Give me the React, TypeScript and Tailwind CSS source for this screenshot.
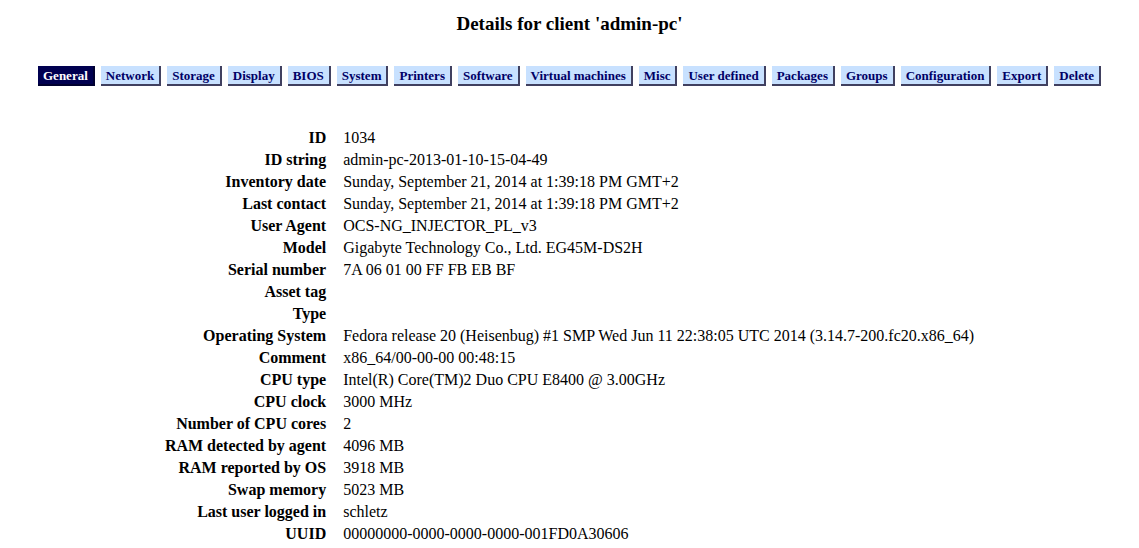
import React from "react";

const tabs = ["General","Network","Storage","Display","BIOS","System","Printers","Software","Virtual machines","Misc","User defined","Packages","Groups","Configuration","Export","Delete"];

const rows: [string, string][] = [
  ["ID", "1034"],
  ["ID string", "admin-pc-2013-01-10-15-04-49"],
  ["Inventory date", "Sunday, September 21, 2014 at 1:39:18 PM GMT+2"],
  ["Last contact", "Sunday, September 21, 2014 at 1:39:18 PM GMT+2"],
  ["User Agent", "OCS-NG_INJECTOR_PL_v3"],
  ["Model", "Gigabyte Technology Co., Ltd. EG45M-DS2H"],
  ["Serial number", "7A 06 01 00 FF FB EB BF"],
  ["Asset tag", ""],
  ["Type", ""],
  ["Operating System", "Fedora release 20 (Heisenbug) #1 SMP Wed Jun 11 22:38:05 UTC 2014 (3.14.7-200.fc20.x86_64)"],
  ["Comment", "x86_64/00-00-00 00:48:15"],
  ["CPU type", "Intel(R) Core(TM)2 Duo CPU E8400 @ 3.00GHz"],
  ["CPU clock", "3000 MHz"],
  ["Number of CPU cores", "2"],
  ["RAM detected by agent", "4096 MB"],
  ["RAM reported by OS", "3918 MB"],
  ["Swap memory", "5023 MB"],
  ["Last user logged in", "schletz"],
  ["UUID", "00000000-0000-0000-0000-001FD0A30606"],
];

export default function App() {
  return (
    <div className="w-[1139px] h-[548px] bg-white overflow-hidden text-black" style={{ fontFamily: '"Liberation Serif", serif' }}>
      <h1 className="text-center font-bold text-[19px] leading-[24px] pt-[12px]">Details for client 'admin-pc'</h1>
      <div className="flex justify-center gap-[6px] mt-[30px]">
        {tabs.map((t, i) => (
          <div
            key={t}
            className={
              "h-[20px] px-[5px] flex items-center text-[13px] font-bold leading-none border-r-2 border-b-2 " +
              (i === 0
                ? "bg-[#000050] text-white border-[#000030]"
                : "bg-[#c8e1ff] text-[#000066] border-[#404060]")
            }
          >
            {t}
          </div>
        ))}
      </div>
      <table className="mx-auto mt-[41px] text-[16px] border-separate border-spacing-0">
        <tbody>
          {rows.map(([k, v]) => (
            <tr key={k} className="h-[22px]">
              <td className="text-right font-bold pr-[8px] leading-[22px] whitespace-nowrap">{k}</td>
              <td className="pl-[9px] leading-[22px] whitespace-nowrap">{v}</td>
            </tr>
          ))}
        </tbody>
      </table>
    </div>
  );
}
